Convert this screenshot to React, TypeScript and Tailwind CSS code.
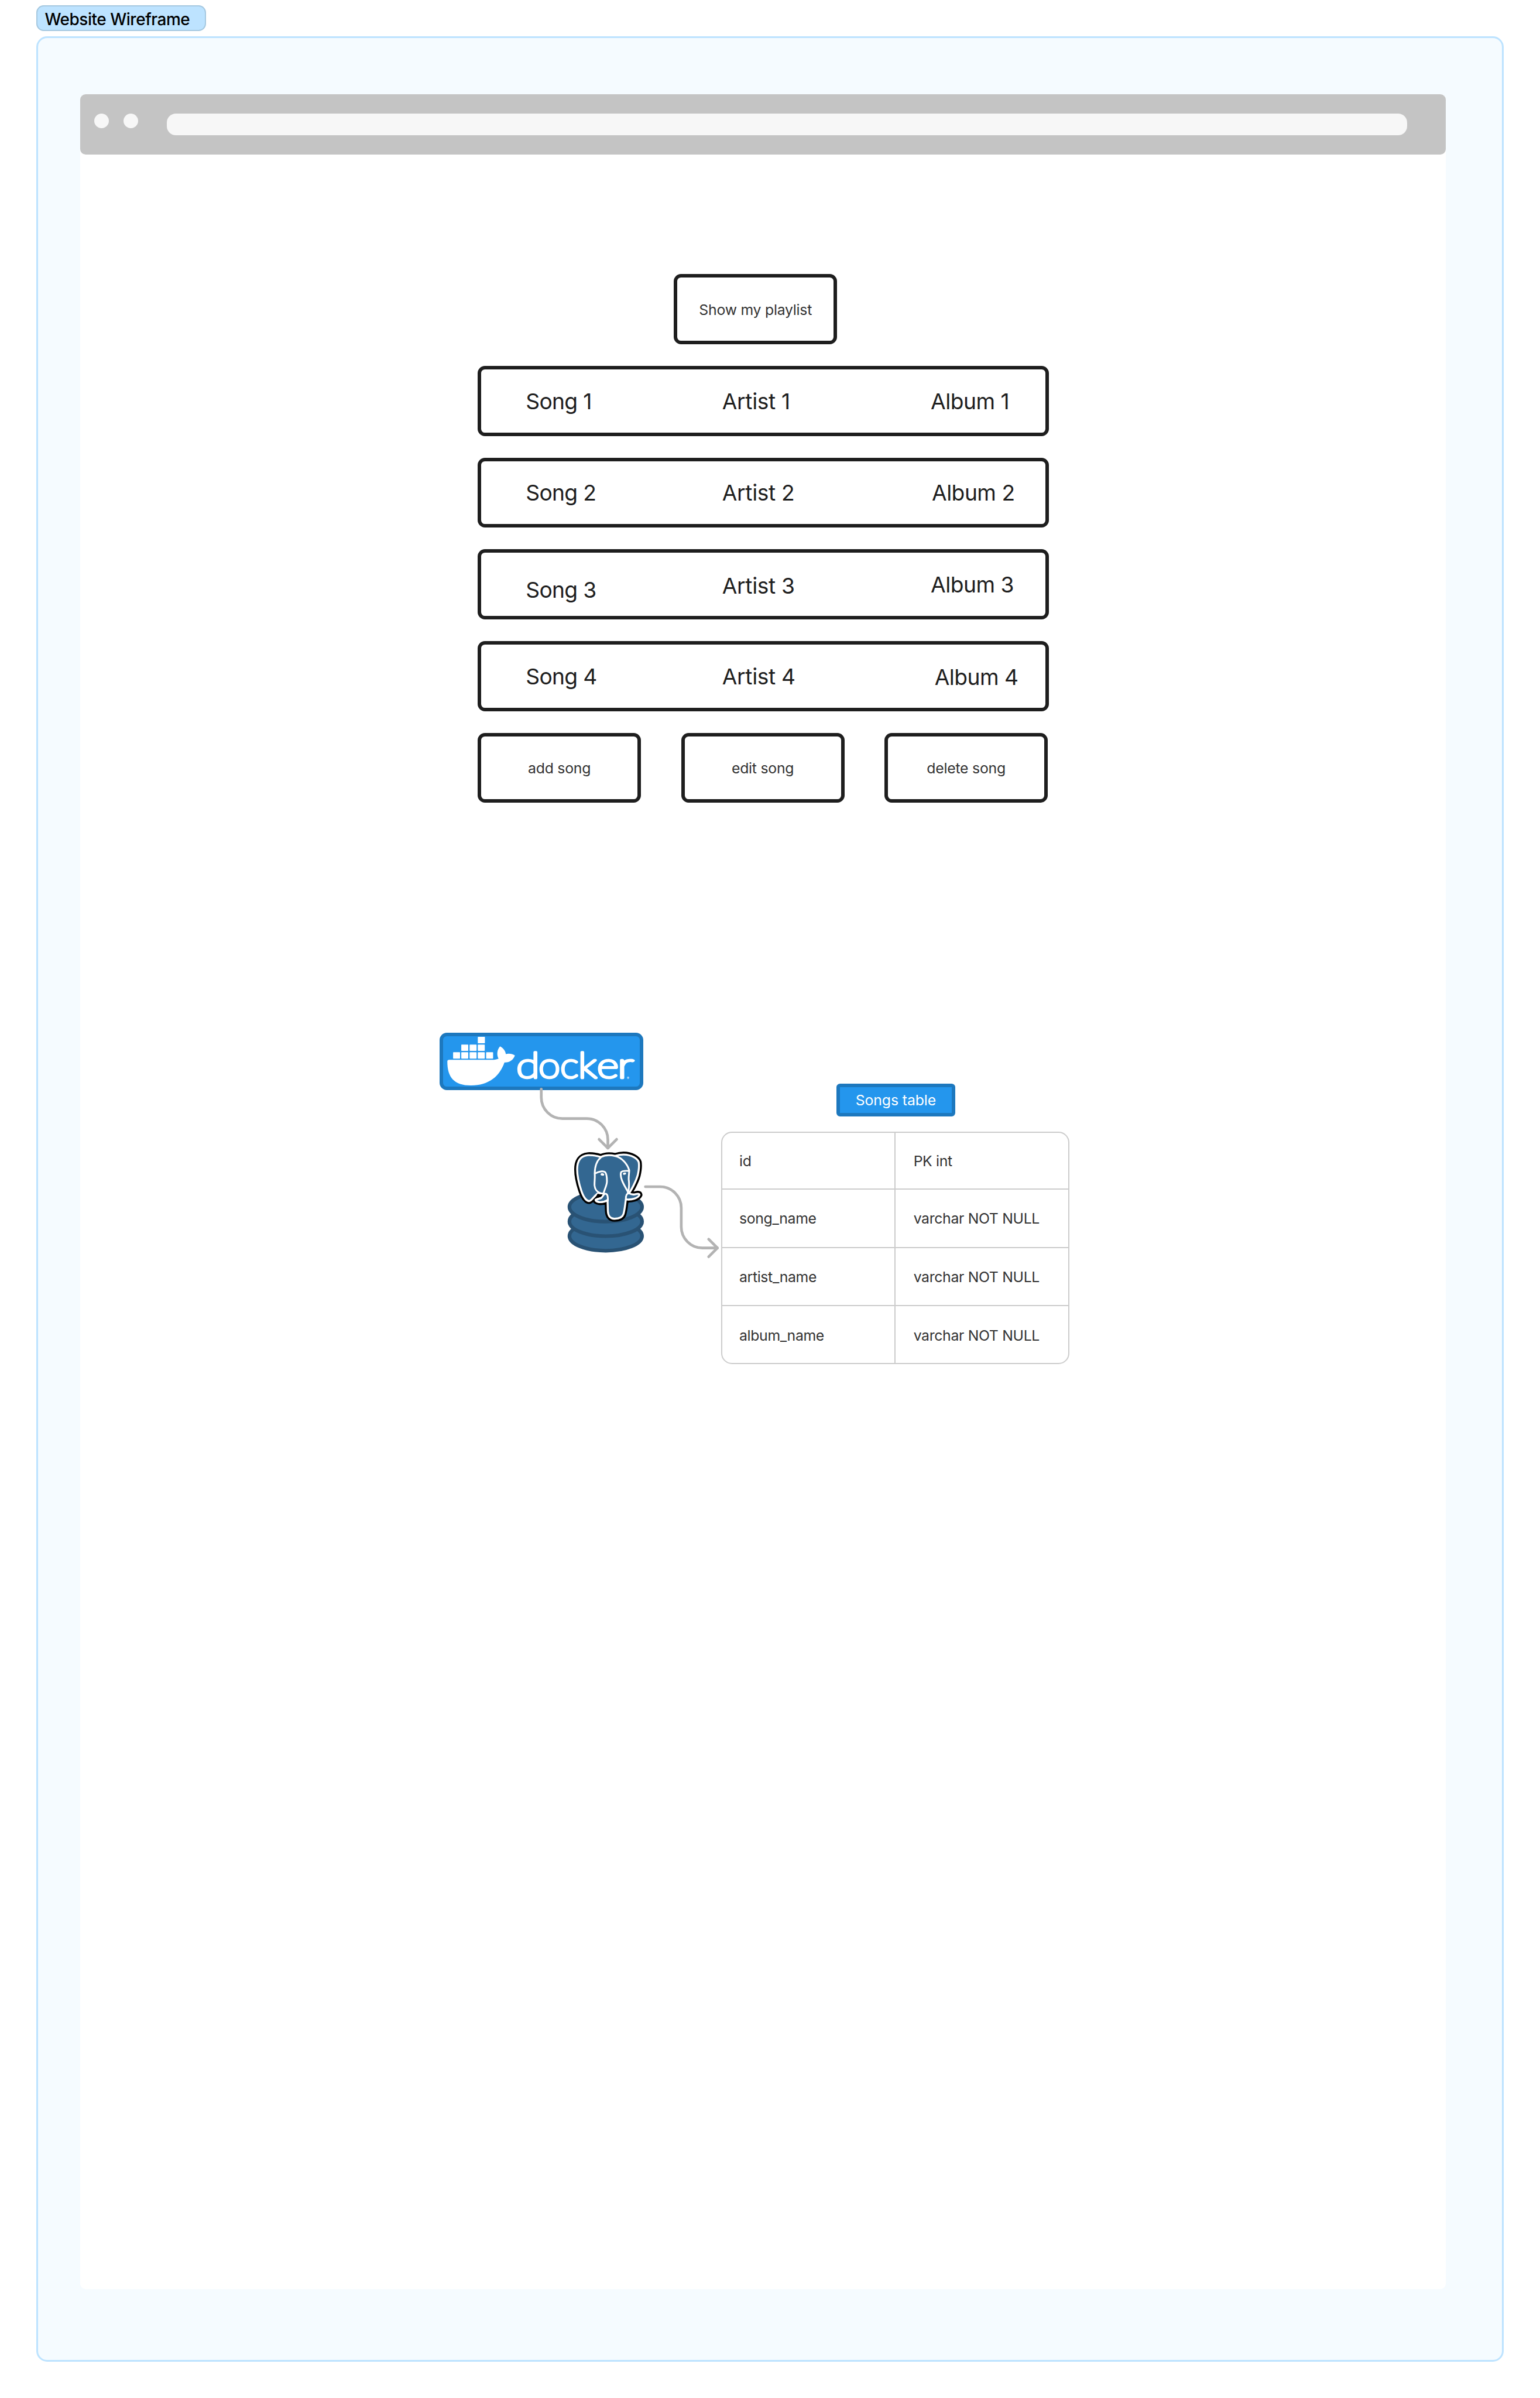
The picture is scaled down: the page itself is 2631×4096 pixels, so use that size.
const songs = [
  { song: "Song 1", artist: "Artist 1", album: "Album 1", songNudge: "", artistNudge: "", albumNudge: "" },
  { song: "Song 2", artist: "Artist 2", album: "Album 2", songNudge: "", artistNudge: "", albumNudge: "pl-[1.9px]" },
  { song: "Song 3", artist: "Artist 3", album: "Album 3", songNudge: "pt-[18px]", artistNudge: "pt-[3.2px]", albumNudge: "" },
  { song: "Song 4", artist: "Artist 4", album: "Album 4", songNudge: "", artistNudge: "", albumNudge: "pl-[6.6px] pt-[3.2px]" },
];

const columns = [
  ["id", "PK int"],
  ["song_name", "varchar NOT NULL"],
  ["artist_name", "varchar NOT NULL"],
  ["album_name", "varchar NOT NULL"],
];

// Wordmark letters: left ink edge, horizontal stretch and side bearing.
const wordmark = [
  { char: "d", left: 569, stretch: 1.235, bearing: 14.7 },
  { char: "o", left: 714, stretch: 1.13, bearing: 14 },
  { char: "c", left: 858, stretch: 1.13, bearing: 14.7 },
  { char: "k", left: 985, stretch: 1.19, bearing: 21.4 },
  { char: "e", left: 1101, stretch: 1.215, bearing: 14.9 },
  { char: "r", left: 1247, stretch: 1.36, bearing: 22.1 },
];

function WireButton({ label }: { label: string }) {
  return (
    <div className="flex h-[119.46px] w-[279.25px] items-center justify-center rounded-[12.4px] border-[6px] border-[#1e1e1e] pt-[2px] text-[24.82px] leading-none tracking-[-0.01em] text-[#333333]">
      {label}
    </div>
  );
}

function DockerBadge() {
  return (
    <div className="h-[97.74px] w-[348.3px] overflow-hidden rounded-[12.4px] border-[6px] border-[#1d78be] bg-[#2496ed]">
      <svg viewBox="78 66 1299 330" preserveAspectRatio="none" className="block h-full w-full" fill="#ffffff">
        <g>
          <rect x="307" y="70" width="47" height="42" rx="3" />
          {[198, 253, 307].map((x) => (
            <rect key={x} x={x} y="121" width="46" height="41" rx="3" />
          ))}
          {[144, 198, 253, 307, 362].map((x) => (
            <rect key={x} x={x} y="171" width="46" height="42" rx="3" />
          ))}
        </g>
        <path d="M106 232Q106 221 118 221L400 221C420 221 434 217 444 213C430 188 434 153 454 132C475 143 490 162 492 183C514 178 536 182 552 192C541 223 515 240 483 238C450 330 380 389 262 389C150 389 106 335 106 232Z" />
        <g stroke="#ffffff" strokeWidth="18" strokeLinejoin="round" fontFamily="Lato" fontWeight="100" fontSize="228">
          {wordmark.map((l) => (
            <text key={l.char} transform={`translate(${l.left} 340) scale(${l.stretch} 1)`} x={9 - l.bearing}>
              {l.char}
            </text>
          ))}
        </g>
        <text x="1291" y="349" fontFamily="Inter" fontSize="22">
          ®
        </text>
      </svg>
    </div>
  );
}

function PostgresDatabase() {
  const head =
    "M490 503C455 492 430 490 405 491C352 495 333 535 333 585C333 625 345 680 362 730C380 780 400 795 413 794C430 791 440 766 470 743C480 745 490 747 503 745L512 748C505 755 500 762 495 770C490 779 470 777 455 786C455 791 462 798 480 801C500 803 515 799 534 790L536 860C538 895 555 912 580 911C612 910 632 903 639 880C648 850 650 815 655 783C695 788 735 775 745 753C743 741 725 747 712 750C700 752 690 750 676 742C690 722 720 670 733 625C740 595 744 560 740 537C732 512 692 488 640 487C615 487 600 491 583 496C550 488 520 488 490 503Z";
  return (
    <g>
      <g fill="#336791" stroke="#295274" strokeWidth="24">
        <ellipse cx="522" cy="1025" rx="240" ry="97" />
        <ellipse cx="522" cy="929" rx="240" ry="97" />
        <ellipse cx="522" cy="833" rx="240" ry="97" />
      </g>
      <path d={head} fill="#000000" stroke="#000000" strokeWidth="39" strokeLinejoin="round" />
      <path d={head} fill="#336791" stroke="#ffffff" strokeWidth="13" strokeLinejoin="round" />
      <path d="M468 746C480 750 492 750 502 750C500 756 494 764 488 768C478 771 466 771 452 776Z" fill="#000000" />
      <g fill="none" stroke="#ffffff" strokeWidth="11.5" strokeLinecap="round" strokeLinejoin="round">
        <path d="M490 505C465 525 450 560 449 612C452 640 447 660 448 690C450 718 468 741 503 745" />
        <path d="M583 496C632 508 665 550 677 590C678 612 670 640 675 662C678 700 674 722 668 738" />
        <path d="M455 610C475 598 505 593 518 603C528 615 530 640 530 662C530 690 515 712 508 742" />
        <path d="M676 595C650 593 630 593 623 604C612 640 645 690 670 736" />
        <path d="M508 748C530 740 537 752 536 790M503 760C495 778 472 776 455 786C455 792 465 799 480 801C500 802 518 797 532 787" />
        <path d="M655 783C654 755 660 744 676 742" />
      </g>
      <g fill="#ffffff">
        <ellipse cx="500" cy="618" rx="12" ry="8" transform="rotate(12 500 618)" />
        <ellipse cx="646" cy="613" rx="11" ry="7" transform="rotate(-12 646 613)" />
      </g>
    </g>
  );
}

function Diagram() {
  return (
    <div className="relative ml-[614.4px] mt-[392.5px] flex">
      <div className="w-[480.9px]">
        <DockerBadge />
      </div>
      {/* Database icon and connectors lie over the canvas between the badge and the table. */}
      <svg viewBox="968 2274 620 520" className="absolute left-0 top-0 h-[403.4px] w-[480.9px]" fill="none">
        <g transform="translate(1160 2380) scale(0.33333)">
          <PostgresDatabase />
          <g stroke="#b3b3b3" strokeWidth="18" strokeLinecap="round" strokeLinejoin="round">
            <path d="M96 54V109A140 140 0 0 0 236 249H396A140 140 0 0 1 536 389V444" />
            <path d="M478 386L536 444L594 386" />
            <path d="M784 699H881A140 140 0 0 1 1021 839V964A140 140 0 0 0 1161 1104H1260" />
            <path d="M1202 1046L1260 1104L1202 1162" />
          </g>
        </g>
      </svg>
      <div className="w-[595.7px] pt-[86.9px]">
        <div className="ml-[197px] flex h-[55.85px] w-[203.2px] items-center justify-center rounded-[6.2px] border-[6px] border-[#1d78be] bg-[#2496ed] pt-px text-[24.82px] leading-none tracking-[-0.004em] text-white">
          Songs table
        </div>
        <div className="mt-[26.4px] h-[397.2px] overflow-hidden rounded-[18.6px] border-2 border-[#cccccc] text-[24.82px] leading-none tracking-[-0.014em] text-[#333333]">
          {columns.map(([name, type]) => (
            <div key={name} className="grid h-[99.3px] grid-cols-2 border-b-2 border-[#cccccc] first:h-[97.3px] last:border-b-0">
              <div className="flex items-center border-r-2 border-[#cccccc] pl-[29.2px] pt-[2px]">{name}</div>
              <div className="flex items-center pl-[31px] pt-[2px]">{type}</div>
            </div>
          ))}
        </div>
      </div>
    </div>
  );
}

export default function App() {
  return (
    <main className="h-[4096px] w-[2631px] overflow-hidden bg-white pl-[62px] pt-[9.3px] font-['Inter',sans-serif] font-[440]">
      <div className="flex h-[43.4px] w-[289.7px] items-center rounded-[12.4px] border-2 border-[#a5c8e0] bg-[#bde3ff] pl-[12.4px] pt-[6px] text-[27.93px] leading-none font-medium tracking-[-0.016em] text-black">
        Website Wireframe
      </div>
      <section className="mt-[9.3px] h-[3971.7px] w-[2507px] rounded-[18.6px] border-[3px] border-[#bde3ff] bg-[#f5fbff] pl-[71.5px] pt-[96.3px]">
        <div className="h-[3748.4px] w-[2333.2px] rounded-[9.3px] bg-white">
          <header className="flex h-[102.4px] items-start rounded-[9.3px] bg-[#c4c4c4] pl-[24.8px] pt-[32.6px]">
            <span className="size-[24.8px] rounded-full bg-[#f7f7f7]" />
            <span className="ml-[24.8px] size-[24.8px] rounded-full bg-[#f7f7f7]" />
            <span className="ml-[49.7px] h-[37.2px] w-[2119.1px] rounded-[15.5px] bg-[#f7f7f7]" />
          </header>
          <div className="ml-[679.5px] mt-[204.8px] flex w-[975.8px] flex-col gap-[37.23px]">
            <div className="pl-[335.1px]">
              <WireButton label="Show my playlist" />
            </div>
            {songs.map((row) => (
              <div
                key={row.song}
                className="grid h-[119.46px] grid-cols-[335.5px_356.4px_1fr] rounded-[12.4px] border-[6px] border-[#1e1e1e] pl-[76.2px] pt-px text-[37.23px] leading-none text-[#1e1e1e]"
              >
                <div className={`flex items-center tracking-[-0.018em] ${row.songNudge}`}>{row.song}</div>
                <div className={`flex items-center tracking-[-0.009em] ${row.artistNudge}`}>{row.artist}</div>
                <div className={`flex items-center tracking-[-0.014em] ${row.albumNudge}`}>{row.album}</div>
              </div>
            ))}
            <div className="flex gap-[68.26px]">
              <WireButton label="add song" />
              <WireButton label="edit song" />
              <WireButton label="delete song" />
            </div>
          </div>
          <Diagram />
        </div>
      </section>
    </main>
  );
}
